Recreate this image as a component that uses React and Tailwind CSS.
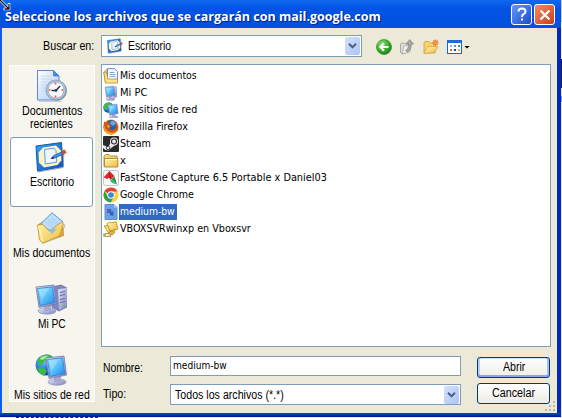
import React, { useLayoutEffect, useRef } from "react";

/* Text condensed or widened to occupy a fixed advance width. */
function Fit({ w, className = "", children }) {
  const ref = useRef(null);
  useLayoutEffect(() => {
    const el = ref.current;
    el.style.transform = "none";
    el.style.transform = `scaleX(${w / el.offsetWidth})`;
  }, [w, children]);
  return (
    <span className="inline-block shrink-0 whitespace-nowrap text-left align-top" style={{ width: w }}>
      <span ref={ref} className={`inline-block origin-left align-top ${className}`}>{children}</span>
    </span>
  );
}

const SANS = "font-['Liberation_Sans',sans-serif] text-[12px] leading-[13px]";
const TAHOMA = "font-['DejaVu_Sans_Condensed','DejaVu_Sans',sans-serif] text-[11px] leading-[15px]";

function Defs() {
  return (
    <svg width="0" height="0" className="absolute">
      <defs>
        <linearGradient id="page" x1="0" y1="0" x2="1" y2="1">
          <stop offset="0" stopColor="#fff" /><stop offset="1" stopColor="#a9c8f5" />
        </linearGradient>
        <linearGradient id="screen" x1="0" y1="0" x2="1" y2="1">
          <stop offset="0" stopColor="#8be4ff" /><stop offset=".5" stopColor="#5cc0fb" /><stop offset="1" stopColor="#1b86e8" />
        </linearGradient>
        <linearGradient id="folder" x1="0" y1="0" x2="1" y2="1">
          <stop offset="0" stopColor="#fff6b4" /><stop offset="1" stopColor="#f0b93a" />
        </linearGradient>
        <linearGradient id="blue" x1="0" y1="0" x2="1" y2="1">
          <stop offset="0" stopColor="#35a4f4" /><stop offset="1" stopColor="#0a4fb8" />
        </linearGradient>
        <linearGradient id="metal" x1="0" y1="0" x2="1" y2="1">
          <stop offset="0" stopColor="#e4e6f8" /><stop offset="1" stopColor="#7e83bd" />
        </linearGradient>
        <radialGradient id="globe" cx=".35" cy=".3" r=".8">
          <stop offset="0" stopColor="#7cc9ff" /><stop offset=".6" stopColor="#1c67d8" /><stop offset="1" stopColor="#073a94" />
        </radialGradient>
        <radialGradient id="green" cx=".35" cy=".3" r=".8">
          <stop offset="0" stopColor="#8be06d" /><stop offset=".6" stopColor="#35a82d" /><stop offset="1" stopColor="#177518" />
        </radialGradient>
      </defs>
    </svg>
  );
}

function Svg({ size, box = 32, children }) {
  return <svg className="block shrink-0" width={size} height={size} viewBox={`0 0 ${box} ${box}`}>{children}</svg>;
}

function RecentIcon() {
  return (
    <Svg size={32}>
      <path d="M4 31.500h22V13" fill="none" stroke="#9aa5b7" opacity=".5" />
      <path d="M2.500 .5h16l5.500 5.500v24H2.500z" fill="url(#page)" stroke="#6186cf" />
      <path d="M18.500 .5v5.500H24z" fill="#478ef0" stroke="#3569bf" strokeWidth=".6" />
      <path d="M6 6h10M6 9h12M6 12h9M6 15h6M6 18h5M6 21h5" stroke="#c6d6f2" />
      <circle cx="22" cy="20.700" r="10" fill="#8593a5" />
      <circle cx="21" cy="20" r="10" fill="#b4c5d7" stroke="#7890aa" strokeWidth=".7" />
      <circle cx="21" cy="20" r="8" fill="#f4faff" stroke="#8ea8c6" strokeWidth=".7" />
      <path d="M20.500 12.500v2M20.500 25.500v2M13.500 20h2M26.500 20h2" stroke="#ee5a29" strokeWidth="1.600" />
      <path d="M25 16l-4 4.500h-4.500" fill="none" stroke="#253042" strokeWidth="1.400" />
      <circle cx="21" cy="20.500" r="1.300" fill="#253042" />
    </Svg>
  );
}

function DesktopIcon({ size = 32 }) {
  return (
    <Svg size={size}>
      <path d="M3 31l25-4.500 1-18" fill="none" stroke="#6d7382" strokeWidth="1.200" opacity=".6" />
      <path d="M1 5L26.500 1.500l1.500 24L2.500 30z" fill="url(#blue)" stroke="#1559aa" />
      <path d="M8 6.500L21 4.500l5 5 .4 10-4 4.500L9 26.500l-5-5-.4-10z" fill="#fff3c6" />
      <path d="M9.500 8.500L19 7.200l2 2.500.6 11.500L10.300 23z" fill="#eef6ff" stroke="#5b9fe6" strokeWidth="1" />
      <path d="M16.500 17.500l2-2.800 8.500-4 1.200 2.500-8.400 3.800z" fill="#3e92ec" stroke="#174c96" strokeWidth=".7" />
      <path d="M15.500 18l2.200-2.200 1.500 1.400z" fill="#112" />
      <path d="M26.500 10.500l3-1.500 1.800 2.500-3.500 2z" fill="#e2512c" stroke="#a92b16" strokeWidth=".5" />
    </Svg>
  );
}

function DocsIcon() {
  return (
    <Svg size={32}>
      <path d="M7 31.500l19-7 4-12" fill="none" stroke="#8d8a78" opacity=".5" strokeWidth="1.200" />
      <path d="M3 13l5-3.500 4 2 15-2 1.500 14L7 29z" fill="#e5af35" stroke="#b88119" strokeWidth=".8" />
      <path d="M6 11.500L17 .8l11 9-8 14z" fill="#b5d8fb" stroke="#609dde" />
      <path d="M9 11.500l8-8 8.500 6.800-6 9.500z" fill="none" stroke="#eaf5ff" strokeDasharray="1 1" />
      <path d="M2.500 13l5-.5 7 6.500 12-9 2 2-4 12L8 31l-3.500-3z" fill="url(#folder)" stroke="#c59020" strokeWidth=".8" />
      <path d="M13 17l9-.5-5 6z" fill="#7fb9f3" opacity=".8" />
      <path d="M3.500 14L8 29.500" fill="none" stroke="#fffbd1" />
    </Svg>
  );
}

function Monitor({ x = 0, y = 0, s = 1 }) {
  return (
    <g transform={`translate(${x} ${y}) scale(${s})`}>
      <ellipse cx="12" cy="27" rx="9" ry="3.200" fill="url(#metal)" stroke="#8186b5" strokeWidth=".6" />
      <path d="M9 20h7v7h-7z" fill="#a4a8d2" />
      <path d="M1 3l18-2 2.500 19L4 23.500z" fill="url(#metal)" stroke="#7579af" strokeWidth=".8" />
      <path d="M2.500 4.500L17.500 2.800l2.200 15.700-14.700 3z" fill="url(#screen)" stroke="#2678c4" strokeWidth=".7" />
      <path d="M3.500 5.500l11-1.500-8 12z" fill="#fff" opacity=".25" />
    </g>
  );
}

function PcIcon() {
  return (
    <Svg size={32}>
      <path d="M17 4l9-2 6 3v19l-8 4-7-4z" fill="#8286bd" stroke="#696da5" strokeWidth=".8" />
      <path d="M23 6.500l9-2v19l-8 3.500z" fill="url(#metal)" />
      <path d="M25 9.500l5-1M25 12.500l5-1M25 16.500l5-1M25 19.500l5-1" stroke="#6468a0" />
      <path d="M28 23h2" stroke="#35d12a" strokeWidth="1.500" />
      <Monitor y={1} />
    </Svg>
  );
}

function NetIcon() {
  return (
    <Svg size={32}>
      <circle cx="11" cy="11" r="10.500" fill="url(#globe)" />
      <path d="M3 5q6-6 13-4l2 4-5 3-3-2-2 4-5 2zM2 14l6-1 4 4-3 5q-6-3-7-8z" fill="#3db84b" />
      <path d="M5 4q4-3 8-2l-3 3-4 1z" fill="#a5ea85" />
      <Monitor x={10} y={1} />
    </Svg>
  );
}

function SmallDocs() {
  return (
    <Svg size={16} box={16}>
      <path d="M.8 4l2.500-2.500H5V14l-2.500 1z" fill="#f3d25f" stroke="#b98a24" strokeWidth=".7" />
      <path d="M4.500 .6h7l3 3V12h-10z" fill="#f4faff" stroke="#5482c4" strokeWidth=".9" />
      <path d="M6.500 4.500h5M6.500 6.500h6M6.500 8.500h6" stroke="#7cabe5" />
      <path d="M.8 4.500L2.500 15h12v-4H4.800L3.500 4z" fill="#fce691" stroke="#b98a24" strokeWidth=".8" />
    </Svg>
  );
}

function SmallPc() {
  return (
    <Svg size={16}>
      <path d="M20 3l8-1v22l-8 3z" fill="url(#metal)" />
      <Monitor x={3} y={1} />
    </Svg>
  );
}

function SmallNet() {
  return (
    <Svg size={16}>
      <circle cx="11" cy="11" r="10.500" fill="url(#globe)" />
      <path d="M2 6q7-7 15-4l-2 7-6 2-3 6-5-4z" fill="#3db84b" />
      <Monitor x={9} y={3} />
    </Svg>
  );
}

function FirefoxIcon() {
  return (
    <Svg size={16} box={16}>
      <circle cx="8" cy="8" r="7.600" fill="#e87515" />
      <circle cx="8.300" cy="6.600" r="5.500" fill="#285da8" />
      <path d="M8 2q4-1 5 3l-3 2-3-2z" fill="#63a5df" />
      <path d="M1 2.500l3 1.500 3-.5-1 2.500 3 1.500-3 1.500q1 3 5 1.500 3-2 2-6 3 3 1.500 6.500Q12 16 7 15.300.5 14 .5 8z" fill="#d9560e" />
      <path d="M1 6q1 4 2 5 3 3.500 8 2.500 3-1 4-3.500-1 5.500-7 5.500T1 9z" fill="#f8ae25" />
      <path d="M4 6l3 1-2 2" fill="#f6b441" />
    </Svg>
  );
}

function SteamIcon() {
  return (
    <Svg size={16} box={16}>
      <rect width="16" height="16" rx="1" fill="#2a2a2c" />
      <path d="M0 9l5 2 3-4.500 4 2.500-5 4-1.500 1.500-3-.5L0 12z" fill="#ececec" />
      <circle cx="11" cy="5.500" r="4" fill="#ececec" />
      <circle cx="11" cy="5.500" r="2.500" fill="#ececec" stroke="#2a2a2c" strokeWidth="1.100" />
      <circle cx="5" cy="11.800" r="1.800" fill="none" stroke="#2a2a2c" strokeWidth=".9" />
    </Svg>
  );
}

function FolderIcon() {
  return (
    <Svg size={16} box={16}>
      <path d="M1 3L2.500 1.500H6L7.500 3H14v10.500H1z" fill="#f5d774" stroke="#a98430" strokeWidth=".9" />
      <path d="M1.500 5.500h13.300V14H1.500z" fill="url(#folder)" stroke="#a98430" strokeWidth=".9" />
      <path d="M2.500 6.500h11.500" stroke="#fffbd5" />
    </Svg>
  );
}

function FastStoneIcon() {
  return (
    <Svg size={16} box={16}>
      <rect x=".5" y=".5" width="15" height="15" rx="2" fill="#fafafa" stroke="#c4c4c4" />
      <path d="M.5 7.500L6.500 1l5 5-3.500 3.500L6 7.500 4.500 9z" fill="#e3242b" />
      <path d="M6.500 1l1.500 8.500L6 7.500z" fill="#b50f18" />
      <path d="M8.500 9.500L11.500 6.500l2.500 8z" fill="#159447" />
      <path d="M6.500 9.500l2 0 5.500 5-5-1.500z" fill="#37b862" />
    </Svg>
  );
}

function ChromeIcon() {
  return (
    <Svg size={16} box={16}>
      <circle cx="8" cy="8" r="7.600" fill="#fbd43a" />
      <path d="M8 8L1.500 4.200A7.500 7.500 0 0 1 14.700 4.600H8z" fill="#df4333" />
      <path d="M1.500 4.200A7.500 7.500 0 0 0 7.600 15.500L11 9.700 8 8 5 9.700z" fill="#2ba24c" />
      <circle cx="8" cy="8" r="3.700" fill="#fff" />
      <circle cx="8" cy="8" r="2.800" fill="#3f83e5" />
    </Svg>
  );
}

function ImageFileIcon() {
  return (
    <Svg size={16} box={16}>
      <path d="M2 .5h9l3 3v12H2z" fill="#6f9fe8" stroke="#5d8cd9" />
      <path d="M11 .5v3h3z" fill="#a7c8f5" />
      <path d="M4 5h4v4H4z" fill="#3467c4" />
      <path d="M7 7.500h3.500V11.500H7z" fill="#2a62cc" />
      <path d="M4.500 5.500h2v2h-2z" fill="#80619c" />
      <path d="M8 5.500h2.500V7.500H8z" fill="#5b93e2" />
    </Svg>
  );
}

function SharedIcon() {
  return (
    <Svg size={16} box={16}>
      <path d="M4 2.500L7 .8l1.500 1L13 .6l2 7.400-9 3z" fill="url(#folder)" stroke="#bd8b1f" strokeWidth=".8" />
      <path d="M1 5l4-.5 2 5.500 5-1.500-1 3-5 1z" fill="#f8dc6a" stroke="#a97f20" strokeWidth=".7" />
      <path d="M5.500 11l4-1 2 1.500-1.500 2-4 .5z" fill="#e9b733" stroke="#8a6d26" strokeWidth=".6" />
      <path d="M2 12.500h4.500l1.500 3H2z" fill="#f7e9a5" stroke="#917a3c" strokeWidth=".7" />
      <path d="M1 12.500v3.300" stroke="#6b6b6b" />
    </Svg>
  );
}

function BackIcon() {
  return (
    <Svg size={16} box={16}>
      <circle cx="8" cy="8" r="7.500" fill="url(#green)" stroke="#2a8a27" strokeWidth=".7" />
      <path d="M12.500 8H5M8 4.200L4.200 8 8 11.800" fill="none" stroke="#fff" strokeWidth="2" />
    </Svg>
  );
}

function UpIcon() {
  return (
    <Svg size={16} box={16}>
      <path d="M1.500 5l2-1.300 2 .8 5-.5v8l-7 3-2-1.500z" fill="#dddcd5" stroke="#9c9c96" strokeWidth=".8" />
      <path d="M3 15l2-8 7-1.500-1 7.500z" fill="#f0efe9" stroke="#a5a49e" strokeWidth=".7" />
      <path d="M6.500 11.500q3-1 3-6.500H7L10.700.6 14.500 5h-2.300q0 6.500-4 8z" fill="#a9aaa8" stroke="#80807d" strokeWidth=".7" />
    </Svg>
  );
}

function NewFolderIcon() {
  return (
    <Svg size={16} box={16}>
      <path d="M1 4L2 2.500h4L7.500 4H12v10H1z" fill="#f8d566" stroke="#c99a2c" strokeWidth=".7" />
      <path d="M1 14.500L4.500 7.500H15l-3.500 6z" fill="url(#folder)" stroke="#cfa13a" strokeWidth=".7" />
      <path d="M12.500 .5v6.500M9.300 3.700h6.400M10.300 1.500l4.400 4.400M14.700 1.500l-4.400 4.400" stroke="#ee6529" strokeWidth="1.100" />
      <circle cx="12.500" cy="3.700" r="1.600" fill="#ff9a3a" />
    </Svg>
  );
}

function ViewIcon() {
  return (
    <svg className="block shrink-0" width="23" height="14" viewBox="0 0 23 14">
      <rect x=".5" y=".5" width="14" height="13" fill="#fff" stroke="#1466d3" />
      <path d="M0 0h15v3H0z" fill="#176edc" />
      <path d="M3 5h2v2H3z" fill="#93b8e7" /><path d="M7 5h2v2H7z" fill="#6c8fd0" /><path d="M11 5h2v2h-2z" fill="#37a94e" />
      <path d="M3 9h2v2H3z" fill="#e86b3c" /><path d="M7 9h2v2H7z" fill="#1c3f9c" /><path d="M11 9h2v2h-2z" fill="#edaa38" />
      <path d="M17.500 6h5L20 8.500z" fill="#000" />
    </svg>
  );
}

function DropButton() {
  return (
    <div className="flex h-[18px] w-[15px] items-center justify-center rounded-[2px] bg-linear-to-br from-[#d4e0fd] to-[#adc3f5]">
      <svg width="9" height="6" viewBox="0 0 9 6"><path d="M1 .8l3.500 3.500L8 .8" fill="none" stroke="#4d6185" strokeWidth="2" /></svg>
    </div>
  );
}

const places = [
  { icon: <RecentIcon />, lines: [["Documentos", 60], ["recientes", 43]] },
  { icon: <DesktopIcon />, lines: [["Escritorio", 44]], active: true },
  { icon: <DocsIcon />, lines: [["Mis documentos", 77]] },
  { icon: <PcIcon />, lines: [["Mi PC", 28]] },
  { icon: <NetIcon />, lines: [["Mis sitios de red", 76]] },
];

const files = [
  ["Mis documentos", 77, <SmallDocs />],
  ["Mi PC", 27, <SmallPc />],
  ["Mis sitios de red", 77, <SmallNet />],
  ["Mozilla Firefox", 68, <FirefoxIcon />],
  ["Steam", 31, <SteamIcon />],
  ["x", 6, <FolderIcon />],
  ["FastStone Capture 6.5 Portable x Daniel03", 207, <FastStoneIcon />],
  ["Google Chrome", 74, <ChromeIcon />],
  ["medium-bw", 55, <ImageFileIcon />],
  ["VBOXSVRwinxp en Vboxsvr", 131, <SharedIcon />],
];

function TitleBar() {
  return (
    <header className="relative flex h-[28px] shrink-0 items-center bg-linear-to-b from-[#1268ee] via-[#0354e4] via-30% to-[#0250e0] pl-[5px] pr-[6px]">
      <div className="grow pt-[3px] leading-[18px]">
        <Fit w={376} className="font-['Open_Sans','Noto_Sans',sans-serif] text-[13px] font-bold leading-[18px] text-white [text-shadow:1px_1px_1px_#0a1f7a]">
          Seleccione los archivos que se cargarán con mail.google.com
        </Fit>
      </div>
      <div className="flex gap-[2px] pt-[1px]">
        <button className="flex h-[21px] w-[21px] items-center justify-center rounded-[3px] border border-white bg-linear-to-br from-[#6a97f6] to-[#1748d0]">
          <svg width="12" height="15" viewBox="0 0 12 15"><path d="M2.500 4.500q0-3 3.500-3t3.500 3q0 1.500-2 2.700Q6 8 6 10" fill="none" stroke="#fff" strokeWidth="2" /><path d="M5 11.500h2v2H5z" fill="#fff" /></svg>
        </button>
        <button className="flex h-[21px] w-[21px] items-center justify-center rounded-[3px] border border-white bg-linear-to-br from-[#f08a68] to-[#cc3a10]">
          <svg width="12" height="12" viewBox="0 0 12 12"><path d="M1.500 1.500l9 9m0-9l-9 9" stroke="#fff" strokeWidth="2.200" /></svg>
        </button>
      </div>
      <svg className="absolute left-0 top-0" width="11" height="11" viewBox="0 0 11 11">
        <path d="M0 0l8 8M9 3v6H3.500" fill="none" stroke="#fff" strokeWidth="2.600" />
        <path d="M0 0l8.500 8.500M9 4v5H4.500" fill="none" stroke="#111" strokeWidth="1.300" />
      </svg>
    </header>
  );
}

export default function App() {
  return (
    <div className="flex h-[418px] w-[562px] flex-col overflow-hidden bg-[#e6e8f6] text-black">
      <Defs />
      <div className="flex h-[417px] shrink-0">
        <div className="flex w-[561px] flex-col bg-linear-to-r from-[#0c5cf0] via-[#0846df] to-[#0229b9]">
          <TitleBar />
          <main className="ml-[2px] flex h-[385px] w-[555px] shrink-0 flex-col bg-[#ece9d8]">
            <div className="flex h-[36px] shrink-0 items-start pt-[7px]">
              <div className="ml-[41px] mt-[5px] h-[14px] w-[58px] leading-[13px]"><Fit w={51} className={SANS}>Buscar en:</Fit></div>
              <div className="flex h-[22px] w-[261px] items-center border border-[#7f9db9] bg-white pl-[5px] pr-[1px]">
                <DesktopIcon size={16} />
                <div className="ml-[5px] h-[13px] grow leading-[13px]"><Fit w={43} className={SANS}>Escritorio</Fit></div>
                <DropButton />
              </div>
              <div className="ml-[14px] mt-[3px] flex h-[17px] items-center">
                <BackIcon />
                <div className="ml-[7px]"><UpIcon /></div>
                <div className="ml-[8px]"><NewFolderIcon /></div>
                <div className="ml-[8px]"><ViewIcon /></div>
              </div>
            </div>

            <div className="flex h-[349px]">
              <nav className="ml-[7px] mt-[1px] flex h-[337px] w-[86px] shrink-0 flex-col border border-[#fffefb] bg-[#f6f5ee]">
                {places.map((p, i) => (
                  <div
                    key={i}
                    className={
                      p.active
                        ? "mb-[1px] flex h-[70px] w-[83px] shrink-0 flex-col items-center rounded-[3px] border border-[#7d9ab8] bg-white pt-[3px]"
                        : "flex h-[71px] w-[83px] shrink-0 flex-col items-center pt-[4px] last:h-[51px]"
                    }
                  >
                    <div className={i === 0 ? "h-[35px] shrink-0 pr-[2px]" : "h-[35px] shrink-0 pr-[1px]"}>{p.icon}</div>
                    {p.lines.map(([t, w]) => (
                      <div key={t} className="h-[13px] leading-[13px]"><Fit w={w} className={SANS}>{t}</Fit></div>
                    ))}
                  </div>
                ))}
              </nav>

              <div className="ml-[6px] flex flex-col">
                <ul className="h-[283px] w-[450px] shrink-0 border border-[#7f9db9] bg-white pl-[1px] pt-[2px]">
                  {files.map(([name, w, icon]) => (
                    <li key={name} className="flex h-[17px] items-center">
                      {icon}
                      <div className={name === "medium-bw" ? "h-[16px] bg-[#316ac5] pl-[1px] pr-[2px] leading-[15px] text-white" : "h-[16px] pl-[1px] leading-[15px]"}>
                        <Fit w={w} className={TAHOMA}>{name}</Fit>
                      </div>
                    </li>
                  ))}
                </ul>
                <div className="flex pt-[9px]">
                  <div className="w-[360px]">
                    <div className="flex">
                      <div className="w-[69px] pl-[2px] pt-[6px] leading-[13px]"><Fit w={40} className={SANS}>Nombre:</Fit></div>
                      <div className="h-[20px] w-[291px] border border-[#7f9db9] bg-white pl-[2px] pt-[1px] leading-[15px]"><Fit w={54} className={TAHOMA}>medium-bw</Fit></div>
                    </div>
                    <div className="mt-[8px] flex">
                      <div className="w-[69px] pl-[2px] pt-[4px] leading-[13px]"><Fit w={23} className={SANS}>Tipo:</Fit></div>
                      <div className="flex h-[21px] w-[291px] items-center border border-[#7f9db9] bg-white pl-[4px] pr-[1px]">
                        <div className="h-[14px] grow pt-[1px] leading-[13px]"><Fit w={109} className={SANS}>Todos los archivos (*.*)</Fit></div>
                        <DropButton />
                      </div>
                    </div>
                  </div>
                  <div className="ml-[16px] flex flex-col gap-[5px] pt-[1px]">
                    <button className="flex h-[21px] w-[73px] items-center justify-center rounded-[3px] border border-[#003c74] bg-linear-to-b from-white to-[#efeee6] leading-[13px] shadow-[inset_0_-2px_0_#8aa4ea,inset_2px_0_0_#b9cdf7,inset_-2px_0_0_#a9c0f3,inset_0_1px_0_#cee0ff]"><Fit w={22} className={SANS}>Abrir</Fit></button>
                    <button className="flex h-[21px] w-[73px] items-center justify-center rounded-[3px] border border-[#003c74] bg-linear-to-b from-white to-[#ecebe4] leading-[13px]"><Fit w={43} className={SANS}>Cancelar</Fit></button>
                  </div>
                </div>
                <svg className="-mt-[5px] ml-[444px] block shrink-0" width="12" height="12" viewBox="0 0 12 12">
                  <path d="M8 1h2v2H8zM4 5h2v2H4zM8 5h2v2H8zM0 9h2v2H0zM4 9h2v2H4zM8 9h2v2H8z" fill="#b8b4a3" />
                </svg>
              </div>
            </div>
          </main>
          <div className="h-[4px] bg-linear-to-b from-[#0a48e0] to-[#00178a]" />
        </div>
        <div className="flex w-[1px] flex-col">
          <div className="h-[22px] bg-[#b9cdf2]" />
          <div className="h-[37px] bg-[#eef1fb]" />
          <div className="h-[29px] bg-[#1b1d33]" />
          <div className="h-[8px] bg-[#dfe6f8]" />
          <div className="h-[6px] bg-[#6f96e8]" />
          <div className="grow bg-[#dfe6f8]" />
        </div>
      </div>
      <div className="flex h-[1px]"><div className="ml-[16px] w-[82px] border-t border-dashed border-[#26264d]" /></div>
    </div>
  );
}
